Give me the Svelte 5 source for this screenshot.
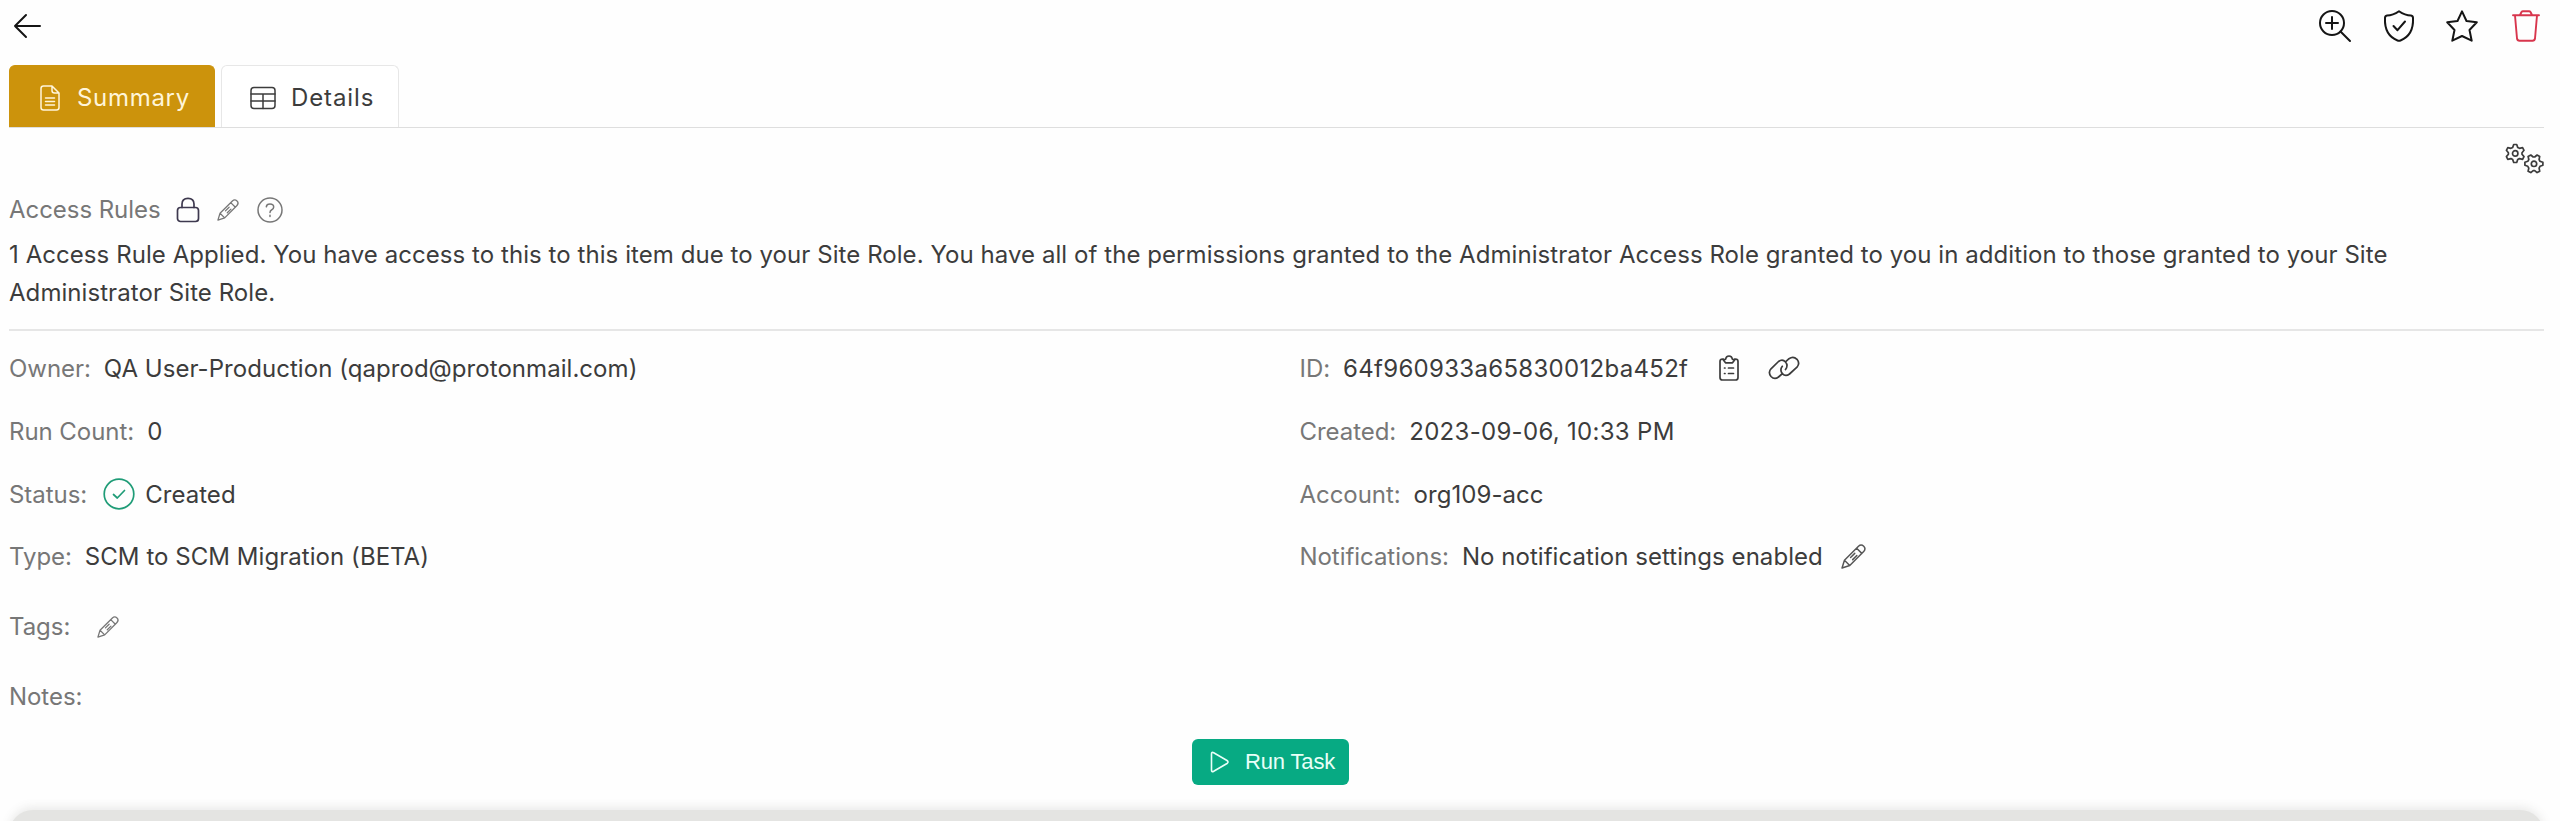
<script>
  const left = [
    { label: 'Owner:', value: 'QA User-Production (qaprod@protonmail.com)' },
    { label: 'Run Count:', value: '0' },
    { label: 'Status:', value: 'Created', status: true },
    { label: 'Type:', value: 'SCM to SCM Migration (BETA)' }
  ];
  const right = [
    { label: 'ID:', value: '64f960933a65830012ba452f', copy: true, numeric: true },
    { label: 'Created:', value: '2023-09-06, 10:33 PM', numeric: true },
    { label: 'Account:', value: 'org109-acc' },
    { label: 'Notifications:', value: 'No notification settings enabled', edit: true }
  ];
  const gear = 'M8.7 1.5H11.7L12.7 4.4 14.5 5.3 17.6 4.7 19 7.3 17 9.7V11.2L19 13.6 17.6 16.3 14.5 15.6 12.7 16.6 11.7 19.5H8.7L7.7 16.6 5.9 15.6 2.8 16.3 1.4 13.6 3.4 11.2V9.7L1.4 7.3 2.8 4.7 5.9 5.3 7.7 4.4Z';
</script>

{#snippet pencil(size)}
  <svg class="pencil" width={size} height={size} viewBox="0 0 24 24">
    <path d="M1 23 3.3 15.6 16.8 2.1Q19.3-.2 21.8 2.1 24.2 4.6 21.8 7.1L8.4 20.6ZM3.3 15.6 8.4 20.6M15 4 20 9M9.2 13 13.200 9M11.200 15 15.200 11" />
  </svg>
{/snippet}

<main>
  <header>
    <svg class="back" width="28" height="26" viewBox="0 0 28 26"><path d="M27 13H2M13 2 2 13 13 24" /></svg>
    <div class="actions">
      <svg width="32" height="32" viewBox="0 0 32 32"><circle cx="13" cy="13" r="12" /><path d="M21.5 21.5 31 31M13 7v12M7 13h12" /></svg>
      <svg width="32" height="32" viewBox="0 0 32 32"><path d="M16 1.2Q22 5.5 28 5.5 30.2 5.8 30 8.5C30.5 20 26 27 17.5 30.5Q16 31.1 14.5 30.5C6 27 1.5 20 2 8.5Q1.8 5.8 4 5.5 10 5.5 16 1.2ZM10.5 16 14.5 20.2 22 11.5" /></svg>
      <svg width="32" height="32" viewBox="0 0 32 32"><path d="M16 1.3 20.5 11 30.8 12.3 23.5 20 25.7 30.7 16 26 6.3 30.7 8.5 20 1.2 12.3 11.5 11Z" /></svg>
      <svg class="trash" width="32" height="32" viewBox="0 0 32 32"><path d="M3 5.2H29M10 5 11.5 2Q12 1.2 13 1.2H19Q20 1.2 20.5 2L22 5M5 5.5 7 28.5Q7.3 30.7 9.5 30.7H22.5Q24.7 30.7 25 28.5L27 5.5" /></svg>
    </div>
  </header>

  <nav>
    <button class="tab active">
      <svg width="20" height="26" viewBox="0 0 20 26"><path d="M3.5 1H12L19 8V22.5Q19 25 16.5 25H3.5Q1 25 1 22.5V3.5Q1 1 3.5 1ZM12 1V5.5Q12 8 14.5 8H19M5.5 13H14.5M5.5 16.5H14.5M5.5 20H14.5" /></svg>
      <span>Summary</span>
    </button>
    <button class="tab">
      <svg width="26" height="24" viewBox="0 0 26 24"><rect x="1" y="1.5" width="24" height="21" rx="3" /><path d="M1 8H25M1 15H25M13 8V22.5" /></svg>
      <span>Details</span>
    </button>
  </nav>

  <div class="settings">
    <svg width="40" height="32" viewBox="0 0 40 32">
      <path d={gear} /><circle cx="10.2" cy="10.4" r="2.7" />
      <g transform="translate(39.4 10.6) rotate(90)"><path d={gear} /><circle cx="10.2" cy="10.4" r="2.7" /></g>
    </svg>
  </div>

  <section class="rules">
    <div class="rules-head">
      <span class="label">Access Rules</span>
      <svg class="lock" width="24" height="26" viewBox="0 0 24 26"><rect x="1.5" y="10.5" width="21" height="14" rx="3" /><path d="M6 10.5V7Q6 1.3 12 1.3 18 1.3 18 7V10.5" /></svg>
      {@render pencil(22)}
      <svg class="help" width="26" height="26" viewBox="0 0 26 26"><circle cx="13" cy="13" r="12" /><path d="M9.3 9.8Q9.6 7 13 7 16.6 7 16.7 10 16.7 12 14.5 13 13 13.7 13 15.5M13 18.3v1.2" /></svg>
    </div>
    <p>1 Access Rule Applied. You have access to this to this item due to your Site Role. You have all of the permissions granted to the Administrator Access Role granted to you in addition to those granted to your Site Administrator Site Role.</p>
  </section>

  <section class="info">
    {#each [left, right] as column}
      <div>
        {#each column as item}
          <div class="row">
            <span class="label">{item.label}</span>
            {#if item.status}
              <svg class="ok" width="32" height="32" viewBox="0 0 32 32"><circle cx="16" cy="16" r="14.8" /><path d="M10.5 16.5 14.3 20 21.5 12.5" /></svg>
            {/if}
            <span class="value" class:numeric={item.numeric}>{item.value}</span>
            {#if item.copy}
              <svg class="clip" width="20" height="26" viewBox="0 0 20 26"><path d="M4.500 4H3.5Q1 4 1 6.5V22.5Q1 25 3.5 25H16.5Q19 25 19 22.5V6.5Q19 4 16.500 4H15.500M4 4.500H6.500Q7 1 10 1T13.500 4.500H16L13.500 7.800H6.500ZM5.500 13h.5M9.500 13h5M5.500 18.500h.5M9.500 18.500h5" /></svg>
              <svg class="link" width="32" height="24" viewBox="0 0 32 24"><path d="M14.5 17.5 10.5 21Q6.5 24 3 20.5-.2 16.5 3 12.8L10.5 5.5Q14.5 2.5 17.5 6 20.5 9.5 17.5 13.5M17.5 5.8 21 2.7Q25.3-.4 29 3.3 32.3 7.4 29 11.2L21.5 18Q17.5 21 14.3 17.6 11.5 14 14.3 10.3" /></svg>
            {/if}
            {#if item.edit}{@render pencil(25)}{/if}
          </div>
        {/each}
      </div>
    {/each}
  </section>

  <div class="extra tags"><span class="label">Tags:</span>{@render pencil(22)}</div>
  <div class="extra"><span class="label">Notes:</span></div>

  <div class="run-wrap">
    <button class="run">
      <svg width="19" height="22" viewBox="0 0 19 22"><path d="M1.5 3Q1.5.6 3.7 1.8L17 9.5Q19 11 17 12.5L3.7 20.2Q1.5 21.4 1.5 19Z" /></svg>
      <span>Run Task</span>
    </button>
  </div>
  <div class="panel"></div>
</main>

<style>
  :global(body) { background: #fefefe; overflow: hidden; }
  main {
    box-sizing: border-box;
    width: 2560px;
    height: 821px;
    padding: 0 16px 0 9px;
    overflow: hidden;
    display: flex;
    flex-direction: column;
    font: 24px/38px Inter, sans-serif;
    letter-spacing: 0.05px;
    color: #3c3c3c;
  }
  svg { flex: none; fill: none; stroke: currentColor; stroke-width: 1.7; stroke-linecap: round; stroke-linejoin: round; overflow: visible; }
  span { white-space: nowrap; }
  button { font: inherit; border: 0; letter-spacing: inherit; }
  header { height: 65px; flex: none; display: flex; justify-content: space-between; color: #151515; }
  .back { margin: 13px 0 0 4px; stroke-width: 2; }
  .actions { display: flex; gap: 31.5px; padding: 10px 2.5px 0 0; }
  .actions svg { stroke-width: 2; }
  .actions .trash { color: #d8364d; stroke-width: 1.9; }
  nav { box-sizing: border-box; height: 63px; flex: none; display: flex; gap: 6px; border-bottom: 1px solid #dedede; }
  .tab { box-sizing: border-box; height: 62px; display: flex; align-items: center; border: 1px solid #e7e7e7; border-bottom: 0; border-radius: 6px 6px 0 0; background: #fff; color: #3c3c3c; letter-spacing: 0.9px; width: 178px; padding: 2px 0 0 28px; gap: 15px; }
  .active { width: 206px; padding-left: 30px; gap: 17px; background: #cc930c; border-color: #cc930c; color: #fff5da; }
  .active span { letter-spacing: 0.7px; }
  .tab svg { stroke-width: 1.5; }
  .settings { height: 63px; flex: none; display: flex; justify-content: flex-end; padding-top: 15px; box-sizing: border-box; }
  .settings svg { margin-right: -1px; }
  .label { color: #777; letter-spacing: -0.05px; }
  .rules { height: 138px; flex: none; border-bottom: 2px solid #e6e6e6; }
  .rules-head { height: 38px; display: flex; align-items: center; }
  .lock { margin: 0 17px 0 15px; color: #3e394f; }
  .pencil, .help { color: #777; }
  .pencil { stroke-width: 1.4; }
  .help { margin-left: 18px; stroke-width: 1.5; }
  p { margin: 7px 0 0; width: 2420px; letter-spacing: 0.065px; }
  .info { display: grid; grid-template-columns: 1290.5px 1fr; padding-top: 7px; }
  .row { height: 62.7px; display: flex; align-items: center; }
  .row .label { margin-right: 13px; }
  .numeric { letter-spacing: 0.3px; }
  .row .ok { color: #1f9c77; margin: -2px 10px 0 3px; }
  .clip { margin: -2px 0 0 31px; }
  .link { margin: -2px 0 0 29px; }
  .row .pencil { margin: -2px 0 0 18px; color: #555; }
  .extra { height: 70px; flex: none; display: flex; align-items: center; }
  .tags { gap: 27px; margin-top: 3px; }
  .run-wrap { flex: none; display: flex; justify-content: center; margin-top: 7.5px; padding-right: 12px; }
  .run { height: 46px; width: 157px; display: flex; align-items: center; gap: 16px; padding: 0 0 0 18px; border-radius: 6px; background: #07aa83; color: #e8fff8; font: 22px "Liberation Sans", sans-serif; letter-spacing: -0.15px; }
  .run svg { stroke-width: 1.6; }
  .panel { height: 60px; flex: none; margin-top: 25px; border-radius: 24px 24px 0 0; background: #e4e4e2; box-shadow: 0 -3px 10px rgba(90, 90, 80, 0.12); }
</style>
